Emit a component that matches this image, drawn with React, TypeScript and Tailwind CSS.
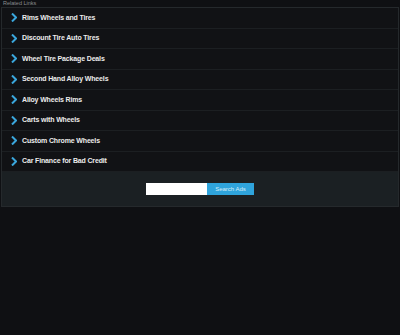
import React from 'react';

const links = [
    'Rims Wheels and Tires',
    'Discount Tire Auto Tires',
    'Wheel Tire Package Deals',
    'Second Hand Alloy Wheels',
    'Alloy Wheels Rims',
    'Carts with Wheels',
    'Custom Chrome Wheels',
    'Car Finance for Bad Credit',
];

const Chevron: React.FC = () => (
    <svg width="6" height="9" viewBox="0 0 6 9" className="shrink-0">
        <path d="M1 0.5 L5 4.5 L1 8.5" fill="none" stroke="#3aa6dc" strokeWidth="2" />
    </svg>
);

const App: React.FC = () => {
    return (
        <div className="w-[400px] h-[335px] bg-[#0f1013] font-['Liberation_Sans',Arial,sans-serif] overflow-hidden">
            <div className="h-[7px] px-[3px] text-[5.5px] leading-[7px] text-[#8a8d90]">Related Links</div>
            <div className="mx-px border border-[#25292c] bg-[#121316]">
                {links.map((l) => (
                    <div
                        key={l}
                        className="h-[20.5px] flex items-center gap-[5px] pl-[9px] border-b border-[#1c1f22] bg-[#111215]"
                    >
                        <Chevron />
                        <span className="text-[7px] tracking-[-0.15px] font-bold text-[#ececec]">{l}</span>
                    </div>
                ))}
                <div className="h-[34px] flex items-center justify-center bg-[#1b2023]">
                    <input className="w-[61px] h-[12px] bg-white border-0 outline-none" />
                    <button className="w-[47px] h-[12px] bg-[#2fa4dc] text-[6px] text-[#d8eef9] leading-[12px]">
                        Search Ads
                    </button>
                </div>
            </div>
        </div>
    );
};

export default App;
